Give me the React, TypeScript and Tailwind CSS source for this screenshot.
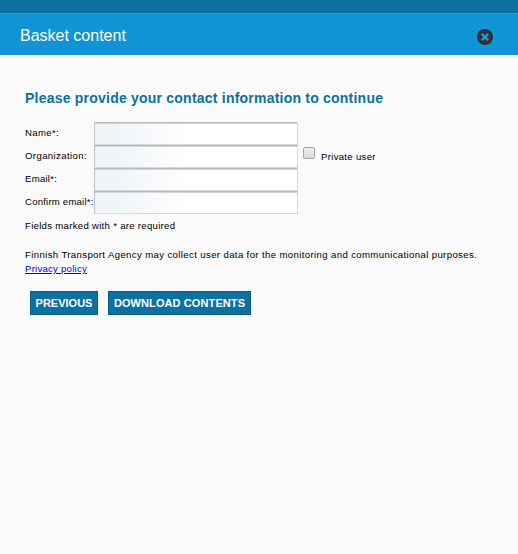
import { useState } from "react";

const fields = [
  { id: "name", label: "Name*:", tracking: "tracking-[0.35px]" },
  { id: "organization", label: "Organization:", tracking: "tracking-[0.38px]" },
  { id: "email", label: "Email*:", tracking: "tracking-[0.25px]" },
  { id: "confirm", label: "Confirm email*:", tracking: "tracking-[0.2px]" },
];

function CloseIcon() {
  return (
    <svg width="16" height="16" viewBox="0 0 16 16" aria-hidden="true">
      <circle cx="8" cy="8" r="8" fill="#303030" />
      <path
        d="M5.6 3.9 L8 6.3 L10.4 3.9 L12.1 5.6 L9.7 8 L12.1 10.4 L10.4 12.1 L8 9.7 L5.6 12.1 L3.9 10.4 L6.3 8 L3.9 5.6 Z"
        fill="#2299d5"
      />
    </svg>
  );
}

function FieldRow({ id, label, tracking }: { id: string; label: string; tracking: string }) {
  const [value, setValue] = useState("");
  return (
    <div className="flex h-[23px]">
      <label htmlFor={id} className={`w-[69px] shrink-0 whitespace-nowrap pt-1 leading-[14px] ${tracking}`}>
        {label}
      </label>
      <input
        id={id}
        value={value}
        onChange={(e) => setValue(e.target.value)}
        className="h-[23px] w-[204px] shrink-0 border border-t-[#b8b8b8] border-r-[#dcdcdc] border-b-[#d8d8d8] border-l-[#c4c4c4] bg-linear-to-r from-[#eff5f8] from-10% to-white to-45% px-1 shadow-[inset_0_1px_1px_#d4d4d4] outline-none"
      />
      {id === "organization" && (
        <label className="flex items-start whitespace-nowrap">
          <input
            type="checkbox"
            className="mt-[2px] ml-[5px] size-3 appearance-none rounded-[2px] border border-[#a5a5a5] bg-linear-to-b from-[#eeeeee] to-[#dcdcdc]"
          />
          <span className="ml-1.5 pt-[5px] leading-[14px] tracking-[0.3px]">Private user</span>
        </label>
      )}
    </div>
  );
}

export default function App() {
  return (
    <div className="h-[554px] w-[518px] overflow-hidden bg-[#fafafa] font-['Liberation_Sans',Arial,sans-serif] text-[9.6px] text-black">
      <div className="h-[13px] bg-[#0c71a1]" />
      <header className="flex h-[42px] items-center justify-between border-t border-[#3f9bc5] bg-[#0f95d3] pr-[25px] pl-5">
        <h1 className="pt-[3px] text-base leading-5 text-white">Basket content</h1>
        <button aria-label="Close" className="mt-[5px]">
          <CloseIcon />
        </button>
      </header>
      <main className="px-[25px] pt-[34px]">
        <h2 className="text-sm leading-[18px] font-bold tracking-[0.22px] text-[#0c71a1]">
          Please provide your contact information to continue
        </h2>
        <form className="pt-[15px]">
          {fields.map((f) => (
            <FieldRow key={f.id} {...f} />
          ))}
        </form>
        <p className="mt-[5px] leading-[14px] tracking-[0.29px]">Fields marked with * are required</p>
        <p className="mt-[15px] leading-[14px] tracking-[0.37px] whitespace-nowrap">
          Finnish Transport Agency may collect user data for the monitoring and communicational purposes.
        </p>
        <a href="#privacy" className="block w-fit leading-[14px] tracking-[0.24px] text-[#0000ee] underline">
          Privacy policy
        </a>
        <div className="mt-[15px] ml-[5px] flex gap-2.5">
          <button className="h-6 w-[68px] border border-[#095b82] bg-[#0c71a1] text-[11px] font-bold whitespace-nowrap text-white">
            PREVIOUS
          </button>
          <button className="h-6 w-[143px] border border-[#095b82] bg-[#0c71a1] text-[11px] font-bold whitespace-nowrap tracking-[0.1px] text-white">
            DOWNLOAD CONTENTS
          </button>
        </div>
      </main>
    </div>
  );
}
